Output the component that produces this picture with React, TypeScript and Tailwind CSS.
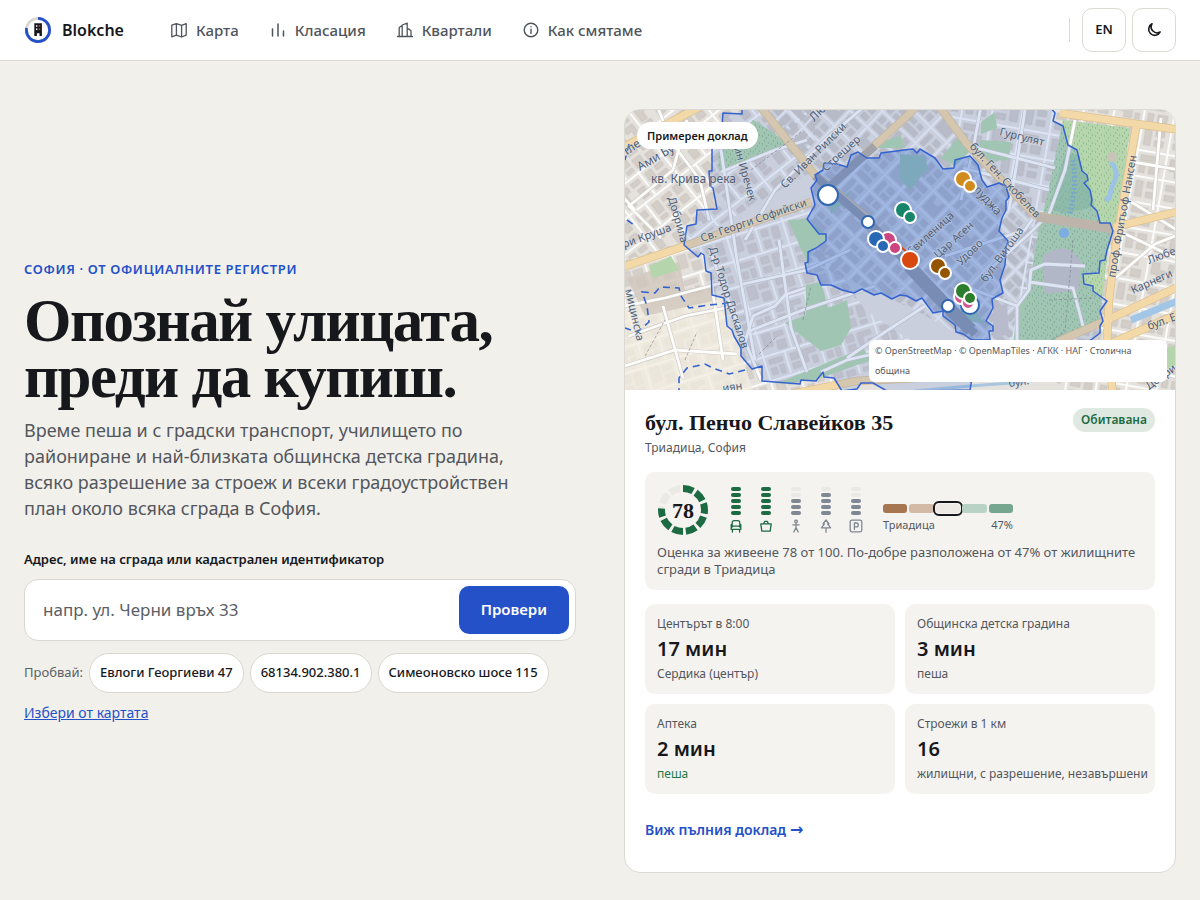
import React, { useState } from 'react';
import { clsx } from 'clsx';

type IconProps = { className?: string };

const SANS = "font-['Noto_Sans','Open_Sans',sans-serif]";
const SERIF = "font-['Liberation_Serif',serif]";

function MapIcon({ className }: IconProps) {
  return (
    <svg viewBox="0 0 18 18" className={className} fill="none" stroke="currentColor" strokeWidth="1.3" strokeLinejoin="round" strokeLinecap="round">
      <path d="M1.8 4.2 6.4 2.6v11.6L1.8 15.8zM6.4 2.6l5.2 1.8V16l-5.2-1.8M11.6 4.4l4.6-1.8v11.6L11.6 16" />
    </svg>
  );
}

function RankIcon({ className }: IconProps) {
  return (
    <svg viewBox="0 0 18 18" className={className} fill="none" stroke="currentColor" strokeWidth="1.5" strokeLinecap="round">
      <path d="M3.5 8v7M9 3v12M14.5 10v5" />
    </svg>
  );
}

function DistrictIcon({ className }: IconProps) {
  return (
    <svg viewBox="0 0 18 18" className={className} fill="none" stroke="currentColor" strokeWidth="1.3" strokeLinejoin="round" strokeLinecap="round">
      <path d="M1.5 15.5h15M3.2 15.5V6.5L6.2 4.5M6.2 15.5V4L11.2 2.2V15.5M11.2 8h1.6L15 9.8v5.7" />
    </svg>
  );
}

function InfoIcon({ className }: IconProps) {
  return (
    <svg viewBox="0 0 18 18" className={className} fill="none" stroke="currentColor" strokeWidth="1.4" strokeLinecap="round">
      <circle cx="9" cy="9" r="6.8" />
      <path d="M9 8.2v4.2M9 5.6v.1" />
    </svg>
  );
}

function MoonIcon({ className }: IconProps) {
  return (
    <svg viewBox="0 0 16 16" className={className} fill="none" stroke="currentColor" strokeWidth="1.6" strokeLinejoin="round">
      <path d="M6 1.8A6.1 6.1 0 1 0 14.2 10 6 6 0 0 1 6 1.8z" />
    </svg>
  );
}

function Logo() {
  return (
    <svg viewBox="0 0 28 28" className="size-7" aria-hidden="true">
      <circle cx="14" cy="14" r="11.6" fill="none" stroke="#d9d7d0" strokeWidth="2.8" />
      <circle cx="14" cy="14" r="11.6" fill="none" stroke="#2450c8" strokeWidth="2.8" pathLength="100" strokeDasharray="78 100" transform="rotate(-90 14 14)" />
      <path d="M10.3 7.3h7.6V20h-2.4v-2.8h-2.6V20h-2.6z" fill="#16181c" />
      <path d="M12 9.3h1.4v1.4H12zM12 12.6h1.4V14H12z" fill="#fff" />
      <path d="M14.8 9.3h1.4v1.4h-1.4zM14.8 12.6h1.4V14h-1.4z" fill="#d9480f" />
    </svg>
  );
}

const NAV = [
  { label: 'Карта', icon: MapIcon },
  { label: 'Класация', icon: RankIcon },
  { label: 'Квартали', icon: DistrictIcon },
  { label: 'Как смятаме', icon: InfoIcon },
];

function Header() {
  return (
    <header className="border-b border-[#dcdad4] bg-white">
      <div className="flex h-15 items-center px-6">
        <a href="#" className="flex items-center gap-2.5 text-base font-semibold">
          <Logo />
          Blokche
        </a>
        <nav className="ml-[46px] flex items-center gap-[30px] text-[15px] font-medium text-[#4f545b]">
          {NAV.map(({ label, icon: Icon }) => (
            <a key={label} href="#" className="flex items-center gap-2">
              <Icon className="size-[18px]" />
              {label}
            </a>
          ))}
        </nav>
        <div className="ml-auto flex items-center gap-1.5">
          <span className="mr-1.5 h-6 w-px bg-[#dcdad4]" />
          <button type="button" className="size-11 rounded-[10px] border border-[#dcdad4] text-[13px] font-semibold">EN</button>
          <button type="button" aria-label="Тъмна тема" className="flex size-11 items-center justify-center rounded-[10px] border border-[#dcdad4]">
            <MoonIcon className="size-4" />
          </button>
        </div>
      </div>
    </header>
  );
}

const EXAMPLES = ['Евлоги Георгиеви 47', '68134.902.380.1', 'Симеоновско шосе 115'];

function Hero() {
  const [query, setQuery] = useState('');

  return (
    <section>
      <p className="text-[13px]/5 font-semibold tracking-wider text-[#2450c8] uppercase">София · от официалните регистри</p>
      <h1 className={clsx(SERIF, 'mt-3.5 text-[61px]/[56px] font-bold tracking-tight')}>
        Опознай улицата, преди да купиш.
      </h1>
      <p className="mt-3 max-w-[510px] text-lg/[26px] text-[#53575d]">
        Време пеша и с градски транспорт, училището по райониране и най-близката общинска детска градина, всяко
        разрешение за строеж и всеки градоустройствен план около всяка сграда в София.
      </p>
      <form className="mt-7" onSubmit={(e) => e.preventDefault()}>
        <label htmlFor="address" className="block text-[13px]/5 font-semibold">
          Адрес, име на сграда или кадастрален идентификатор
        </label>
        <div className="mt-2.5 flex items-center rounded-[14px] border border-[#d9d7cf] bg-white p-1.5">
          <input
            id="address"
            value={query}
            onChange={(e) => setQuery(e.target.value)}
            placeholder="напр. ул. Черни връх 33"
            className="h-12 min-w-0 flex-1 px-3 text-[17px] outline-none placeholder:text-[#5b5f66]"
          />
          <button type="submit" className="h-12 rounded-[10px] bg-[#2450c8] px-[22px] text-[15px] font-semibold text-white">
            Провери
          </button>
        </div>
      </form>
      <div className="mt-3 flex flex-wrap items-center gap-1.5">
        <span className="text-[13px] text-[#5b5f66]">Пробвай:</span>
        {EXAMPLES.map((text) => (
          <button
            key={text}
            type="button"
            onClick={() => setQuery(text)}
            className="h-10 rounded-full border border-[#d9d7cf] bg-white px-2.5 text-[13px] font-medium"
          >
            {text}
          </button>
        ))}
      </div>
      <a href="#" className="mt-2.5 inline-block text-sm/5 text-[#2450c8] underline">Избери от картата</a>
    </section>
  );
}

const OUTER =
  'M117 4 98 3 97 16 90 24 87 40V61H84L85 76 88 78 92 99 72 100 71 114 62 116 59 135 73 147 76 143 79 145 81 161 86 163 87 185 99 188 102 216 107 220 109 226 116 238V246L127 259 137 256V271L175 274 176 270 191 271 198 262 199 267 209 268 217 281 232 279 236 273 248 273 262 281H300L345 280 347 268 466 230 475 223V216L478 211 475 201 482 191 468 181V176L459 174 458 164 474 163 475 151 480 150 482 140 488 121 485 113H475L472 101 466 95 467 90 465 80 459 73 463 70 462 65 457 61 452 40 443 35 438 16 428 11 430 3 426-2H117z';

const INNER =
  'M279 40 256 43 254 48 242 48 233 42 226 45 222 57 212 54 199 53 198 60 190 65 192 70 186 78 190 95 182 109 194 124H201V131L191 138 183 142V152L180 153 182 163 192 165 196 175H206L217 180 229 183 237 179 249 185 256 183 267 189 275 185 282 186 291 191 297 188 308 203 318 201V206L330 215 331 222 338 224 347 230H365L364 221H368V216L361 211 368 198 367 189 378 183 375 170 380 155 381 138 383 131 374 121 377 108 381 100V91L384 87 381 76 374 73 362 77 357 70 353 55 345 46 330 50 329 58 318 59 310 48 295 39 292 43 288 39z';

const MAJOR_ROADS = [
  'M-5 39 76-4',
  'M-5 158 60 136 186 92',
  'M135-4 190 65 245 110',
  'M203 78 282 6 292-4',
  'M314-4 342 34 410 105 430 109 486 118 555 101',
  'M435 3 555 20',
  'M512 12 505 52 490 140 484 190 482 232 488 285',
  'M432 232 482 210 555 176',
  'M480 236 555 203',
  'M166 284 232 271 330 266 440 262',
];

const STREETS = [
  'M32-4 48 34 75 70 84 110',
  'M62 10 48 60 4 96 36 128',
  'M10 100-4 85',
  'M96 62 150 40 182 30',
  'M96 40 112 150 130 250',
  'M120 130 150 80 200 30 240-4',
  'M118 174 182 160 225 140',
  'M122 222 178 200 250 176',
  'M154 130 166 218 182 262',
  'M84 138 104 192 136 270',
  'M120 232 128 206 150 196 160 185 180 178',
  'M356-4 348 40 336 90',
  'M400 0 392 52 384 100',
  'M344 36 430 58',
  'M338 58 424 80',
  'M450 10 440 60 424 104 404 124 366 158',
  'M320 146 400 120 408 108',
  'M350 180 392 196 404 180 406 160 420 154 460 156',
  'M404 172 448 178 458 216',
  'M392 196 392 240 384 270',
  'M508 52 555 60',
  'M500 88 555 122',
  'M492 120 555 150',
  'M488 170 530 134 555 124',
  'M536 8 528 100',
  'M0 196 40 188 100 172',
  'M4 226 60 206 110 196',
  'M38 196 58 268',
  'M86 170 98 250',
  'M0 256 50 240 112 244',
  'M222 248 260 222 300 196',
  'M196 262 222 250 300 232',
  'M490 250 555 268',
];

const LABELS = [
  { text: 'кв. Крива река', x: 26, y: 73, rotate: 0, size: 12 },
  { text: 'Ами Бу', x: 15, y: 61, rotate: -30, size: 12 },
  { text: 'тле', x: 1, y: 46, rotate: -35, size: 12 },
  { text: 'ри Круша', x: -1, y: 138, rotate: -20, size: 11 },
  { text: 'Добрила', x: 43, y: 88, rotate: 74, size: 11 },
  { text: 'ин Иречек', x: 109, y: 38, rotate: 74, size: 11 },
  { text: 'Св. Иван Рилски', x: 160, y: 79, rotate: -45, size: 11 },
  { text: 'Стрешер', x: 201, y: 62, rotate: -42, size: 11 },
  { text: 'Лю', x: 189, y: 12, rotate: -45, size: 12 },
  { text: 'Св. Георги Софийски', x: 77, y: 132, rotate: -19, size: 11 },
  { text: 'Д-р Тодор Даскалов', x: 84, y: 138, rotate: 72, size: 11 },
  { text: 'мицинска', x: 0, y: 180, rotate: 77, size: 11 },
  { text: 'Гургулят', x: 374, y: 25, rotate: 14, size: 11 },
  { text: 'бул. Ген. Скобелев', x: 344, y: 37, rotate: 47, size: 11 },
  { text: 'луджа', x: 348, y: 80, rotate: 48, size: 12 },
  { text: 'Свиленица', x: 286, y: 146, rotate: -42, size: 11 },
  { text: 'Цар Асен', x: 313, y: 149, rotate: -42, size: 11 },
  { text: 'Удово', x: 336, y: 156, rotate: -44, size: 11 },
  { text: 'бул. Витоша', x: 361, y: 173, rotate: -54, size: 11 },
  { text: 'проф. Фритьоф Нансен', x: 490, y: 168, rotate: -80, size: 11 },
  { text: 'Любен', x: 524, y: 154, rotate: -20, size: 11 },
  { text: 'Карнеги', x: 508, y: 184, rotate: -24, size: 11 },
  { text: 'бул. Е', x: 524, y: 220, rotate: -20, size: 11 },
  { text: 'бул.', x: 384, y: 277, rotate: -8, size: 11 },
  { text: 'Добри', x: 524, y: 280, rotate: -36, size: 11 },
  { text: 'иян', x: 98, y: 282, rotate: -8, size: 11 },
];

const PINS = [
  { x: 203, y: 85, r: 10, fill: '#ffffff', ring: '#2f66b0' },
  { x: 243, y: 112, r: 6, fill: '#ffffff', ring: '#2f66b0' },
  { x: 345, y: 195, r: 9, fill: '#ffffff', ring: '#2f66b0' },
  { x: 323, y: 196, r: 6, fill: '#ffffff', ring: '#2f66b0' },
  { x: 263, y: 130, r: 8, fill: '#cc4580', ring: '#ffffff' },
  { x: 251, y: 129, r: 8, fill: '#2868b4', ring: '#ffffff' },
  { x: 270, y: 138, r: 6, fill: '#cc4580', ring: '#ffffff' },
  { x: 258, y: 136, r: 6, fill: '#2868b4', ring: '#ffffff' },
  { x: 278, y: 100, r: 8, fill: '#17856a', ring: '#ffffff' },
  { x: 285, y: 107, r: 6, fill: '#17856a', ring: '#ffffff' },
  { x: 338, y: 69, r: 8, fill: '#d18a1c', ring: '#ffffff' },
  { x: 345, y: 76, r: 6, fill: '#d18a1c', ring: '#ffffff' },
  { x: 313, y: 156, r: 8, fill: '#945400', ring: '#ffffff' },
  { x: 320, y: 163, r: 6, fill: '#945400', ring: '#ffffff' },
  { x: 336, y: 187, r: 7, fill: '#d15a8c', ring: '#ffffff' },
  { x: 343, y: 193, r: 6, fill: '#d15a8c', ring: '#ffffff' },
  { x: 338, y: 181, r: 8, fill: '#2c7d2c', ring: '#ffffff' },
  { x: 345, y: 188, r: 6, fill: '#2c7d2c', ring: '#ffffff' },
  { x: 285, y: 150, r: 9, fill: '#d9480f', ring: '#ffffff' },
];

function CityMap() {
  return (
    <svg viewBox="0 0 550 280" preserveAspectRatio="xMidYMid slice" className="block h-full w-full" role="img" aria-label="Карта на района">
      <defs>
        <pattern id="blocks-nw" width="64" height="56" patternUnits="userSpaceOnUse" patternTransform="rotate(-38)">
          <path d="M0 2h64M0 30h64M2 0v56M36 0v30M22 30v26" stroke="#fbfbfa" strokeWidth="2" />
          <path
            d="M6 6h12v6h-5v8H6zM22 6h10v5H22zM24 15h8v11h-8zM6 22h9v4H6zM40 6h8v9h-8zM52 6h9v5h-9zM50 15h11v11h-5v-5h-6zM40 19h6v7h-6zM6 35h12v7H6zM6 46h5v8H6zM14 46h5v8h-5zM26 35h8v12h-8zM38 35h11v5H38zM53 34h8v9h-8zM38 44h10v10H38zM52 47h9v7h-9zM26 50h8v4h-8z"
            fill="#d4cec8" stroke="#c2bcb5" strokeWidth=".5"
          />
        </pattern>
        <pattern id="blocks-w" width="58" height="50" patternUnits="userSpaceOnUse" patternTransform="rotate(-17)">
          <path d="M0 2h58M0 27h58M2 0v50M32 0v27M24 27v23" stroke="#fbfbfa" strokeWidth="1.8" />
          <path
            d="M6 5h9v14H6zM18 6h10v5H18zM19 15h9v9h-9zM36 5h7v7h-7zM47 5h7v12h-7zM36 16h7v8h-7zM47 20h7v4h-7zM6 31h14v5H6zM6 40h6v7H6zM15 39h5v9h-5zM28 31h8v7h-8zM40 31h14v5h-9v8h-5zM28 41h8v6h-8zM49 40h5v7h-5z"
            fill="#d6d0ca" stroke="#c6c0ba" strokeWidth=".5"
          />
        </pattern>
        <pattern id="blocks-core" width="66" height="46" patternUnits="userSpaceOnUse" patternTransform="rotate(-46)">
          <path d="M0 2h66M0 24h66M2 0v46M24 0v46M46 0v46" stroke="#f4f4f4" strokeWidth="1.8" />
          <path
            d="M5 5h16v4h-6v8h6v4H5zM27 5h6v16h-6zM36 5h7v6h-7zM37 14h6v7h-6zM49 5h14v5H49zM49 13h5v8h-5zM57 14h6v7h-6zM5 27h7v7H5zM15 27h6v16h-6zM5 37h7v6H5zM27 27h16v5H27zM27 35h6v8h-6zM36 36h7v7h-7zM49 27h6v16h-6zM58 27h5v7h-5zM58 37h5v6h-5z"
            fill="#cfcbc6" stroke="#c2bdb8" strokeWidth=".4"
          />
        </pattern>
        <pattern id="blocks-e" width="60" height="52" patternUnits="userSpaceOnUse" patternTransform="rotate(10)">
          <path d="M0 2h60M0 28h60M2 0v52M32 0v52" stroke="#fbfbfa" strokeWidth="2" />
          <path
            d="M6 6h8v7h6v11h-8v-6H6zM23 6h5v8h-5zM23 18h5v6h-5zM36 6h16v6H36zM36 16h6v8h-6zM46 16h10v8H46zM6 32h10v6H6zM20 32h8v16h-8zM6 42h10v6H6zM36 32h7v16h-7zM47 32h9v6h-9zM47 42h9v6h-9z"
            fill="#d3cec8" stroke="#c1bbb5" strokeWidth=".5"
          />
        </pattern>
        <pattern id="trees" width="9" height="8" patternUnits="userSpaceOnUse">
          <path d="M2 2h1M6 4h1M4 7h1M8 1h1" stroke="#5c9462" strokeOpacity=".7" strokeWidth="1" />
        </pattern>
      </defs>

      <rect width="550" height="280" fill="#e5e2de" />
      <path d="M0 0H190V60L60 135 0 150z" fill="url(#blocks-nw)" />
      <path d="M0 150 60 135 186 92 200 140 240 200 300 240 190 280H0z" fill="url(#blocks-w)" />
      <path d="M140 0H314L420 110 380 250 290 200 180 150 190 65z" fill="url(#blocks-core)" />
      <path d="M314 0H550V280H440L384 230 410 105z" fill="url(#blocks-e)" />
      <path d="M0 196 36 165 52 186 100 180 118 250 128 280H0z" fill="#f1ecdf" fillOpacity=".75" />
      <path d="M2 168 54 152 60 180 90 176 92 190 20 206z" fill="#cfc6bc" fillOpacity=".8" />

      {/* parks */}
      <g fill="#b5d6ac">
        <path d="M438 10 505 18 500 60 490 116 418 104 432 40z" />
        <path d="M415 112 486 122 482 150 474 212 430 232 384 270 392 200 404 180 410 140z" />
        <path d="M181 175 196 172 203 198 222 190 226 218 216 235 196 241 160 213 181 205z" />
        <path d="M163 110 182 109 201 125 201 131 186 140 184 156 172 130z" />
        <path d="M93 44 116 24 128 10 148 22 162 34 118 52 94 62z" />
        <path d="M275 44 300 46 303 58 285 80 275 70z" />
        <path d="M316 48 334 26 344 42 330 56z" />
        <path d="M356 12 370 2 372 18 356 24zM356 30 386 32 384 50 350 52z" />
        <path d="M150 274 238 238 246 250 190 270z" />
        <path d="M24 156 46 146 54 160 28 168z" />
        <path d="M252 38 280 38 276 26 262 30z" />
        <path d="M204 96 226 80 220 92 206 104zM326 200 350 200 360 214 340 210z" />
        <path d="M496 256 530 240 550 236V256L510 270z" />
      </g>
      <path d="M438 10 505 18 490 116 418 104zM415 112 486 122 474 212 430 232 384 270 404 180zM93 44 128 10 162 34 94 62z" fill="url(#trees)" />
      <path d="M440 44 452 44 464 72 470 96 440 104 424 98z" fill="#8fc09a" fillOpacity=".6" />
      <path d="M418 146q24-18 38 6l-2 28-34 4z" fill="#c9c6c6" />
      <path d="M368 196 382 194 384 224 368 228z" fill="#cfcbcb" />

      {/* water */}
      <path d="M486 52q8 10 4 18t-6 18l-4 2" fill="none" stroke="#9cc3e6" strokeWidth="5" />
      <path d="M448 50q4 24-3 54" fill="none" stroke="#86b4c8" strokeWidth="5" strokeDasharray="2 2" />
      <circle cx="439" cy="123" r="5" fill="#8ab8e8" />
      <circle cx="487" cy="47" r="5" fill="#c9c4b8" />
      <path d="M506 210 555 190" stroke="#a2c6e6" strokeWidth="7" />
      <path d="M290 281 345 276 400 272" fill="none" stroke="#a9c6de" strokeWidth="3" />

      {STREETS.map((d) => <path key={d} d={d} fill="none" stroke="#cfcbc6" strokeWidth="4" />)}
      {STREETS.map((d) => <path key={d} d={d} fill="none" stroke="#fdfdfc" strokeWidth="2.8" />)}
      {MAJOR_ROADS.map((d) => <path key={d} d={d} fill="none" stroke="#dcc090" strokeWidth="8.4" />)}
      {MAJOR_ROADS.map((d) => <path key={d} d={d} fill="none" stroke="#f3d9a8" strokeWidth="7" />)}
      <path d="M190 66 250 118 290 162 350 224" fill="none" stroke="#aca6a0" strokeWidth="8" />
      <path d="M284 156 316 190 346 220" fill="none" stroke="#aca6a0" strokeWidth="13" />
      <path d="M203 78 250 36" fill="none" stroke="#b5aca2" strokeWidth="8" />
      <path d="M412 107 488 119" fill="none" stroke="#d6c3a4" strokeWidth="9" />
      <path d="M126 60 176 22M178 210 186 176M134 244 152 226M448 130 440 222 402 244M424 190 470 188M20 246 40 210M60 250 72 222" fill="none" stroke="#8f8a86" strokeWidth=".7" strokeDasharray="3 2" />

      <path d={OUTER} fill="#4370d8" fillOpacity=".17" stroke="#3463d0" strokeWidth="1.5" strokeLinejoin="round" />
      <path d={INNER} fill="#2f68d0" fillOpacity=".31" stroke="#3463d0" strokeWidth="1.5" strokeLinejoin="round" />
      <path
        d="M104 193 84 195 64 198 56 186 54 178 35 177 30 183 17 182 22 196 24 212 12 222 0 218M120 260 104 264 88 258 80 254 62 258 54 268 54 284M4 34 0 50M2 110 10 116"
        fill="none" stroke="#3463d0" strokeWidth="1.6" strokeDasharray="7 5"
      />

      <g className="font-['Noto_Sans',sans-serif]" fill="#4f5f78" stroke="#e4e7ee" strokeWidth="1.4" strokeOpacity=".4" paintOrder="stroke">
        {LABELS.map((l) => (
          <text key={l.text + l.x} fontSize={l.size} transform={`translate(${l.x} ${l.y}) rotate(${l.rotate})`}>{l.text}</text>
        ))}
      </g>

      <path d="M276 137 283 143" stroke="#d9480f" strokeWidth="2" />
      {PINS.map((p) => <circle key={`${p.x}-${p.y}`} cx={p.x} cy={p.y} r={p.r} fill={p.fill} stroke={p.ring} strokeWidth="2" />)}
    </svg>
  );
}

const SCORE = 78;

function ScoreRing() {
  return (
    <div className="relative size-[52px]">
      <svg viewBox="0 0 52 52" className="size-full -rotate-90" fill="none" strokeWidth="7">
        {Array.from({ length: 10 }, (_, i) => {
          const filled = Math.min(1, Math.max(0, SCORE / 10 - i));
          return (
            <g key={i}>
              <circle cx="26" cy="26" r="21.5" stroke="#ebe9e4" pathLength="100" strokeDasharray="7.8 92.2" strokeDashoffset={-i * 10} />
              {filled > 0 && (
                <circle cx="26" cy="26" r="21.5" stroke="#1d6b42" pathLength="100" strokeDasharray={`${7.8 * filled} 100`} strokeDashoffset={-i * 10} />
              )}
            </g>
          );
        })}
      </svg>
      <span className={clsx(SERIF, 'absolute inset-0 flex items-center justify-center text-[22px] font-bold')}>{SCORE}</span>
    </div>
  );
}

const FACTORS = [
  { name: 'Транспорт', level: 5, d: 'M3.4 13V10.4M10.6 13V10.4M3.2 8V3.6Q3.2 1.6 5.2 1.6H8.8Q10.8 1.6 10.8 3.6V8M3.2 7.2H10.8M2.2 5.6V10.4H11.8V5.6' },
  { name: 'Магазини', level: 5, d: 'M1.8 4.8H12.2L11.2 12.2H2.8zM4.5 4.8 5.8 2.4H8.2L9.5 4.8' },
  { name: 'Пешеходци', level: 3, d: 'M7 1.2a1.3 1.3 0 1 0 .1 0M7 4.2V8.6M3.8 5.8H10.2M7 8.6 4.8 13M7 8.6 9.2 13' },
  { name: 'Зеленина', level: 4, d: 'M7 1 4 4.8H5.4L2.4 8.8H11.6L8.6 4.8H10zM7 8.8V13.2' },
  { name: 'Паркиране', level: 3, d: 'M3 1.2H11Q12.8 1.2 12.8 3V11Q12.8 12.8 11 12.8H3Q1.2 12.8 1.2 11V3Q1.2 1.2 3 1.2zM5.4 10.4V4H7.4a1.9 1.9 0 0 1 0 3.8H5.4' },
];

function Factor({ name, level, d }: { name: string; level: number; d: string }) {
  const full = level === 5;
  return (
    <div className="flex w-3.5 flex-col items-center" title={name}>
      <div className="flex flex-col gap-0.5">
        {[5, 4, 3, 2, 1].map((n) => (
          <span key={n} className={clsx('h-1 w-2.5 rounded-full', n > level ? 'bg-[#ebe9e5]' : full ? 'bg-[#1d6b42]' : 'bg-[#7f8793]')} />
        ))}
      </div>
      <svg
        viewBox="0 0 14 14"
        className={clsx('mt-1 size-3.5', full ? 'text-[#1d6b42]' : 'text-[#7f8793]')}
        fill="none" stroke="currentColor" strokeWidth="1.3" strokeLinejoin="round" strokeLinecap="round"
      >
        <path d={d} />
      </svg>
    </div>
  );
}

function Spectrum() {
  return (
    <div className="w-[130px] pt-4">
      <div className="flex gap-0.5 *:h-[9px] *:flex-1 *:rounded-[3px]">
        <span className="bg-[#a67650]" />
        <span className="bg-[#d2baa6]" />
        <span className="bg-[#edeae5] outline-2 outline-offset-1 outline-[#16181c]" />
        <span className="bg-[#b8d3c5]" />
        <span className="bg-[#76a68e]" />
      </div>
      <div className="mt-1 flex justify-between text-[11px]/4 text-[#53575d]">
        <span>Триадица</span>
        <span>47%</span>
      </div>
    </div>
  );
}

const FACTS = [
  { label: 'Центърът в 8:00', value: '17 мин', note: 'Сердика (център)' },
  { label: 'Общинска детска градина', value: '3 мин', note: 'пеша' },
  { label: 'Аптека', value: '2 мин', note: 'пеша', good: true },
  { label: 'Строежи в 1 км', value: '16', note: 'жилищни, с разрешение, незавършени' },
];

function ReportCard() {
  return (
    <article className="overflow-hidden rounded-2xl border border-[#dcdad4] bg-white">
      <div className="relative h-[280px]">
        <CityMap />
        <span className="absolute top-3 left-3 rounded-full bg-white px-2.5 py-1 text-[11px]/[19px] font-semibold">Примерен доклад</span>
        <p className="absolute right-2 bottom-2 w-[298px] rounded-md bg-white px-1.5 py-px text-[9px]/5 text-[#53575d]">
          © OpenStreetMap · © OpenMapTiles · АГКК · НАГ · Столична община
        </p>
      </div>
      <div className="p-5">
        <div className="flex items-start justify-between">
          <h2 className={clsx(SERIF, 'text-[22px]/[26px] font-bold')}>бул. Пенчо Славейков 35</h2>
          <span className="-mt-0.5 rounded-full bg-[#dfe9e2] px-2 text-xs/6 font-semibold text-[#1d6b42]">Обитавана</span>
        </div>
        <p className="mt-0.5 text-xs/5 text-[#53575d]">Триадица, София</p>

        <div className="mt-3.5 rounded-[10px] bg-[#f5f3f0] p-3">
          <div className="flex items-center">
            <ScoreRing />
            <div className="ml-5 flex gap-4">
              {FACTORS.map((f) => <Factor key={f.name} {...f} />)}
            </div>
            <div className="ml-5">
              <Spectrum />
            </div>
          </div>
          <p className="mt-2 text-[13px]/[17px] text-[#53575d]">
            Оценка за живеене 78 от 100. По-добре разположена от 47% от жилищните сгради в Триадица
          </p>
        </div>

        <dl className="mt-3.5 grid grid-cols-2 gap-2.5">
          {FACTS.map((f) => (
            <div key={f.label} className="rounded-[10px] bg-[#f5f3f0] p-3">
              <dt className="text-xs/4 text-[#53575d]">{f.label}</dt>
              <dd className="my-1 text-xl/[26px] font-semibold">{f.value}</dd>
              <dd className={clsx('text-xs/4 whitespace-nowrap', f.good ? 'text-[#1f7a48]' : 'text-[#53575d]')}>{f.note}</dd>
            </div>
          ))}
        </dl>

        <a href="#" className="mt-3.5 flex h-11 items-center gap-1 text-sm font-semibold text-[#2450c8]">
          Виж пълния доклад <span className="font-['DejaVu_Sans',sans-serif] text-base">→</span>
        </a>
      </div>
    </article>
  );
}

export default function App() {
  return (
    <div lang="bg" className={clsx(SANS, 'min-h-screen bg-[#f2f0eb] text-[#16181c]')}>
      <Header />
      <main className="grid grid-cols-2 items-center gap-12 px-6 pt-12 pb-7">
        <Hero />
        <ReportCard />
      </main>
    </div>
  );
}
